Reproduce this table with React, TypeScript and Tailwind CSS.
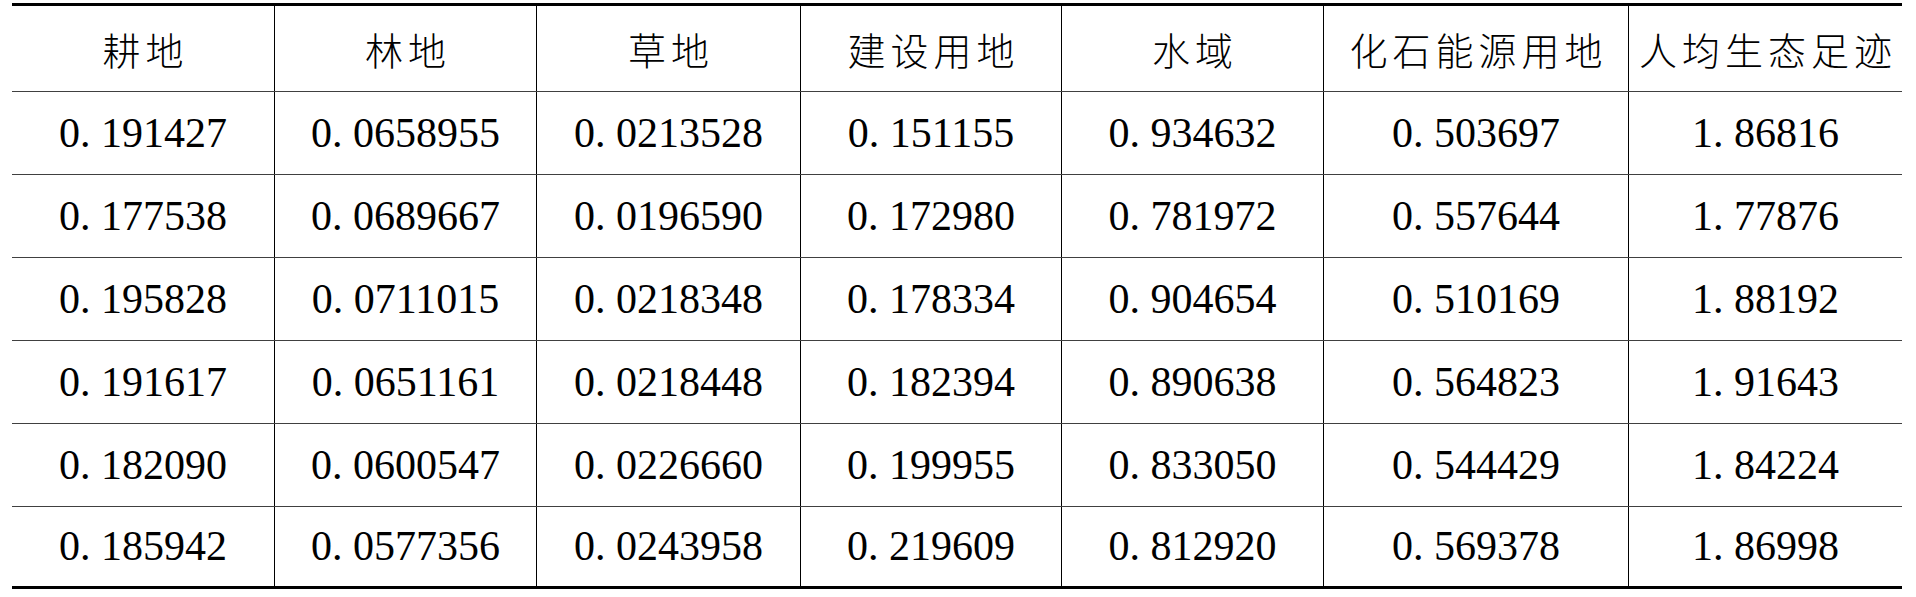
const headers = ['耕地', '林地', '草地', '建设用地', '水域', '化石能源用地', '人均生态足迹'];

const rows: string[][] = [
  ['0. 191427', '0. 0658955', '0. 0213528', '0. 151155', '0. 934632', '0. 503697', '1. 86816'],
  ['0. 177538', '0. 0689667', '0. 0196590', '0. 172980', '0. 781972', '0. 557644', '1. 77876'],
  ['0. 195828', '0. 0711015', '0. 0218348', '0. 178334', '0. 904654', '0. 510169', '1. 88192'],
  ['0. 191617', '0. 0651161', '0. 0218448', '0. 182394', '0. 890638', '0. 564823', '1. 91643'],
  ['0. 182090', '0. 0600547', '0. 0226660', '0. 199955', '0. 833050', '0. 544429', '1. 84224'],
  ['0. 185942', '0. 0577356', '0. 0243958', '0. 219609', '0. 812920', '0. 569378', '1. 86998'],
];

const grid = 'grid grid-cols-[262px_262px_264px_261px_262px_305px_274px]';

export default function App() {
  return (
    <div className="w-[1916px] h-[597px] bg-white pt-[3px] pl-[12px]">
      <div className="w-[1890px] border-t-[3px] border-b-[3px] border-black text-black">
        <div className={`${grid} h-[86px] border-b border-[#404040]`}>
          {headers.map((h, i) => (
            <div
              key={h}
              className={`flex items-center justify-center pl-[5px] text-[38px] font-light tracking-[5px] font-['Noto_Sans_CJK_SC',sans-serif] ${i > 0 ? 'border-l border-black' : ''}`}
            >
              {h}
            </div>
          ))}
        </div>
        {rows.map((r, ri) => (
          <div
            key={ri}
            className={`${grid} ${ri < rows.length - 1 ? 'h-[83px] border-b border-[#404040]' : 'h-[79px]'}`}
          >
            {r.map((v, i) => (
              <div
                key={i}
                className={`flex items-center justify-center text-[42px] font-['Liberation_Serif',serif] whitespace-pre ${i > 0 ? 'border-l border-black' : ''}`}
              >
                {v}
              </div>
            ))}
          </div>
        ))}
      </div>
    </div>
  );
}
